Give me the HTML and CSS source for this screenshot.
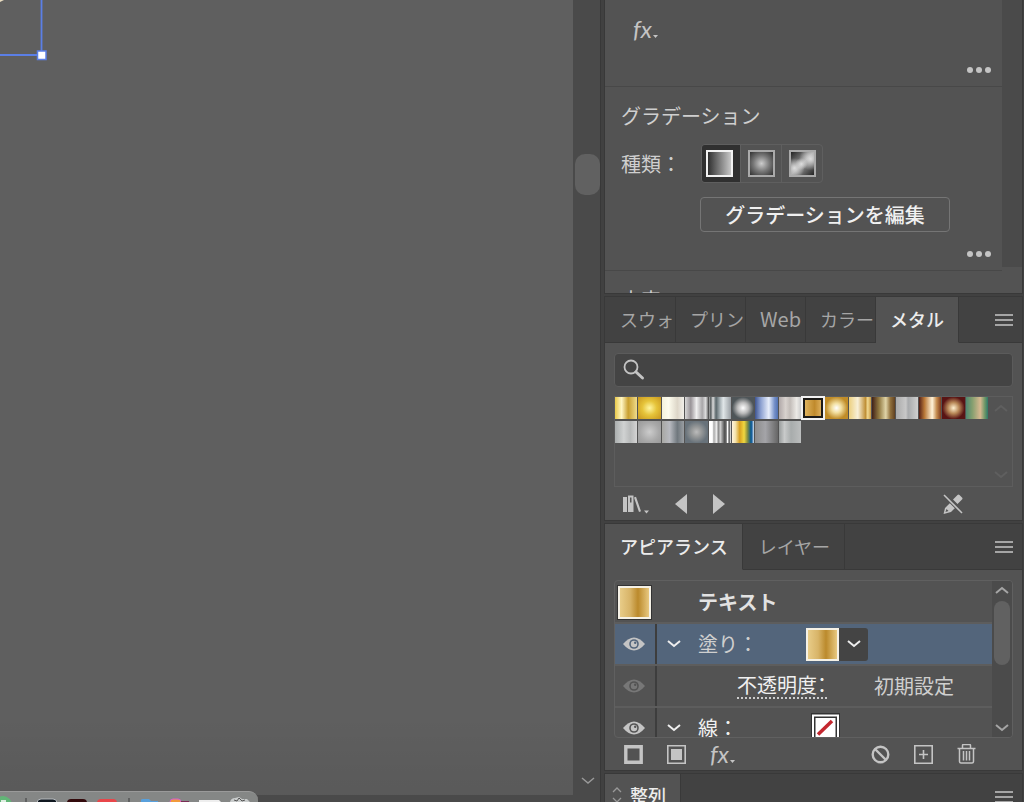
FILE: index.html
```html
<!DOCTYPE html>
<html lang="ja">
<head>
<meta charset="utf-8">
<title>グラデーション</title>
<link rel="stylesheet" href="styles.css">
</head>
<body>
<div class="app">
  <main class="document">
    <div class="artboard">
      <svg class="selection" width="50" height="64" viewBox="0 0 50 64" aria-hidden="true">
        <path d="M0 0h4L0 2z" fill="#e9dcc0"/>
        <path d="M0 55H41.500V0" fill="none" stroke="#5b7fe6" stroke-width="1.800"/>
        <rect x="37.500" y="51" width="8.500" height="8.500" fill="#fff" stroke="#5b7fe6" stroke-width="1.500"/>
      </svg>
    </div>
    <div class="scroll-y">
      <div class="thumb"></div>
      <svg width="14" height="8" viewBox="0 0 14 8" aria-hidden="true"><path d="M1 1l6 5 6-5" fill="none" stroke="#999" stroke-width="1.500"/></svg>
    </div>
    <div class="scroll-x"></div>
    <div class="dock" aria-hidden="true">
      <svg width="258" height="10" viewBox="0 0 258 10">
        <circle cx="3" cy="13" r="9" fill="#62b577"/><path d="M1 8h5v2H1z" fill="#dcefe0"/>
        <path d="M26 6v4M129 6v4" stroke="#555" stroke-width="1.500"/>
        <rect x="37" y="7" width="20" height="10" rx="4" fill="#101820" stroke="#b5b9bd"/>
        <rect x="67" y="7" width="20" height="10" rx="4" fill="#330a0c"/>
        <rect x="97" y="7" width="20" height="10" rx="4" fill="#e8464a"/>
        <path d="M141 10V8q0-1 2-1h6l2 2h7v1z" fill="#58a0dc"/>
        <rect x="170" y="7" width="11" height="8" rx="3" fill="#f19a3c" stroke="#d45fd0"/><path d="M181 9h8v1h-8z" fill="#7a2d55"/>
        <path d="M199 8h20l2 2h-22z" fill="#eee"/>
        <path d="M230 10q1-4 5-4l4-1 3 2 5 0 3 3z" fill="#c9cccc"/><path d="M234 8l3 1 2-3 3 3 3-1" fill="none" stroke="#555"/>
      </svg>
    </div>
  </main>

  <aside class="panels">
    <section class="panel properties">
      <div class="sections">
        <div class="section effects">
          <button class="fx" aria-label="効果を追加"><i>fx</i><svg width="5" height="3" viewBox="0 0 5 3"><path d="M0 0h5L2.500 3z"/></svg></button>
          <button class="more" aria-label="その他のオプション"><svg width="24" height="6" viewBox="0 0 24 6"><circle cx="3" cy="3" r="3"/><circle cx="12" cy="3" r="3"/><circle cx="21" cy="3" r="3"/></svg></button>
        </div>
        <div class="section gradient">
          <h2>グラデーション</h2>
          <div class="field">
            <span class="field-name">種類：</span>
            <div class="types">
              <button class="type on" aria-label="線形"><span class="chip linear"></span></button>
              <button class="type" aria-label="円形"><span class="chip radial"></span></button>
              <button class="type" aria-label="フリーグラデーション"><span class="chip freeform"></span></button>
            </div>
          </div>
          <button class="edit">グラデーションを編集</button>
          <button class="more" aria-label="その他のオプション"><svg width="24" height="6" viewBox="0 0 24 6"><circle cx="3" cy="3" r="3"/><circle cx="12" cy="3" r="3"/><circle cx="21" cy="3" r="3"/></svg></button>
        </div>
        <div class="section next"><h2>文字</h2></div>
      </div>
      <div class="track"></div>
    </section>

    <section class="panel">
      <nav class="tabs">
        <button class="tab">スウォ</button><button class="tab">プリン</button><button class="tab latin">Web</button><button class="tab">カラー</button><button class="tab active">メタル</button>
        <button class="menu" aria-label="パネルメニュー"><svg width="18" height="12" viewBox="0 0 18 12"><path d="M0 1h18M0 6h18M0 11h18"/></svg></button>
      </nav>
      <div class="body">
        <label class="search">
          <svg width="22" height="22" viewBox="0 0 22 22" aria-hidden="true"><circle cx="8" cy="8" r="6.500" fill="none" stroke="#c4c4c4" stroke-width="1.800"/><path d="M13 13l6.500 6" stroke="#c4c4c4" stroke-width="3" stroke-linecap="round"/></svg>
          <input type="text" aria-label="スウォッチを検索">
        </label>
        <div class="well">
          <div class="swatches">
            <button class="s1" aria-label="ゴールド 1"></button><button class="s2" aria-label="ゴールド 2"></button><button class="s3" aria-label="パール"></button><button class="s4" aria-label="シルバー 1"></button><button class="s5" aria-label="シルバー 2"></button><button class="s6" aria-label="スチール"></button><button class="s7" aria-label="ブルー"></button><button class="s8" aria-label="プラチナ"></button><button class="s9 chosen" aria-label="ゴールド 3"></button><button class="s10" aria-label="ゴールド 4"></button><button class="s11" aria-label="ゴールド 5"></button><button class="s12" aria-label="ブロンズ"></button><button class="s13" aria-label="アルミ"></button><button class="s14" aria-label="カッパー 1"></button><button class="s15" aria-label="カッパー 2"></button><button class="s16" aria-label="パティナ"></button>
            <button class="s17" aria-label="クローム 1"></button><button class="s18" aria-label="クローム 2"></button><button class="s19" aria-label="クローム 3"></button><button class="s20" aria-label="クローム 4"></button><button class="s21" aria-label="クローム 5"></button><button class="s22" aria-label="スペクトル"></button><button class="s23" aria-label="グレー 1"></button><button class="s24" aria-label="グレー 2"></button>
          </div>
          <div class="well-arrows">
            <svg width="14" height="8" viewBox="0 0 14 8"><path d="M1 7l6-5 6 5"/></svg>
            <svg width="14" height="8" viewBox="0 0 14 8"><path d="M1 1l6 5 6-5"/></svg>
          </div>
        </div>
        <div class="tools library">
          <button aria-label="ライブラリ"><svg width="26" height="20" viewBox="0 0 26 20"><path d="M0 3h4v15H0zM5 1.500h5.500V18H5zM11 3.500l2-.7 5 14.500-2 .7z"/><path d="M7 3.500h1.500v5H7z" fill="#535353"/><path d="M21 16.500h5l-2.500 3z"/></svg></button>
          <button aria-label="前へ"><svg width="12" height="20" viewBox="0 0 12 20"><path d="M12 0v20L0 10z"/></svg></button>
          <button aria-label="次へ"><svg width="12" height="20" viewBox="0 0 12 20"><path d="M0 0v20l12-10z"/></svg></button>
          <button class="push" aria-label="編集不可"><svg width="20" height="20" viewBox="0 0 20 20"><path d="M10 5.500L14.500 1q1-1 2 0l2.500 2.500q1 1 0 2L14.500 10zM8 8l5 5-5 5-7.500 2L2 14zM3.500 15L2.500 18l3-1z" fill-rule="evenodd"/><path d="M1 1l18 18" stroke="#535353" stroke-width="3.400"/><path d="M1 1l18 18" stroke="#c4c4c4" stroke-width="1.600"/></svg></button>
        </div>
      </div>
    </section>

    <section class="panel">
      <nav class="tabs">
        <button class="tab active">アピアランス</button><button class="tab wide">レイヤー</button>
        <button class="menu" aria-label="パネルメニュー"><svg width="18" height="12" viewBox="0 0 18 12"><path d="M0 1h18M0 6h18M0 11h18"/></svg></button>
      </nav>
      <div class="body">
        <div class="list">
          <div class="rows">
            <div class="row target"><span class="gold framed"></span><strong>テキスト</strong></div>
            <div class="row selected">
              <button class="eye" aria-label="表示"><svg width="22" height="14" viewBox="0 0 22 14"><path d="M0 7Q11-6 22 7 11 20 0 7z"/><circle cx="11" cy="7" r="4.800" class="hole"/><circle cx="11" cy="7" r="3.200"/><circle cx="12.200" cy="5.800" r="1.200" class="hole"/></svg></button>
              <button class="fold" aria-label="折りたたむ"><svg width="14" height="8" viewBox="0 0 14 8"><path d="M1 1l6 5 6-5"/></svg></button>
              <span class="name">塗り：</span>
              <span class="picker"><span class="gold"></span><button aria-label="塗りを選択"><svg width="14" height="8" viewBox="0 0 14 8"><path d="M1 1l6 5 6-5"/></svg></button></span>
            </div>
            <div class="row">
              <button class="eye dim" aria-label="表示"><svg width="22" height="14" viewBox="0 0 22 14"><path d="M0 7Q11-6 22 7 11 20 0 7z"/><circle cx="11" cy="7" r="4.800" class="hole"/><circle cx="11" cy="7" r="3.200"/><circle cx="12.200" cy="5.800" r="1.200" class="hole"/></svg></button>
              <a class="opacity" href="#">不透明度：</a><span class="value">初期設定</span>
            </div>
            <div class="row">
              <button class="eye" aria-label="表示"><svg width="22" height="14" viewBox="0 0 22 14"><path d="M0 7Q11-6 22 7 11 20 0 7z"/><circle cx="11" cy="7" r="4.800" class="hole"/><circle cx="11" cy="7" r="3.200"/><circle cx="12.200" cy="5.800" r="1.200" class="hole"/></svg></button>
              <button class="fold" aria-label="折りたたむ"><svg width="14" height="8" viewBox="0 0 14 8"><path d="M1 1l6 5 6-5"/></svg></button>
              <span class="name bright">線：</span>
              <svg class="none" width="29" height="30" viewBox="0 0 29 30"><path d="M0 0h29v30H0z" fill="#333"/><path d="M1 1.500h27V29H1z" fill="#fff"/><path d="M3 3.500h23V27H3z" fill="#333"/><path d="M4.500 5h20v20.500h-20z" fill="#fff"/><path d="M7 21.500L21 8" stroke="#c4272f" stroke-width="3.500"/></svg>
            </div>
          </div>
          <div class="list-scroll">
            <svg width="14" height="8" viewBox="0 0 14 8"><path d="M1 7l6-5 6 5"/></svg>
            <div class="thumb"></div>
            <svg width="14" height="8" viewBox="0 0 14 8"><path d="M1 1l6 5 6-5"/></svg>
          </div>
        </div>
        <div class="tools">
          <button aria-label="新規線を追加"><svg width="19" height="19" viewBox="0 0 19 19"><path d="M1.800 1.800h15.400v15.400H1.800z" fill="none" stroke="#c4c4c4" stroke-width="3.400"/></svg></button>
          <button aria-label="新規塗りを追加"><svg width="19" height="19" viewBox="0 0 19 19"><path d="M.8.8h17.400v17.400H.8z" fill="none" stroke="#c4c4c4" stroke-width="1.600"/><path d="M4 4h11v11H4z"/></svg></button>
          <button class="fx" aria-label="新規効果を追加"><i>fx</i><svg width="5" height="3" viewBox="0 0 5 3"><path d="M0 0h5L2.500 3z"/></svg></button>
          <button class="push" aria-label="アピアランスを消去"><svg width="19" height="19" viewBox="0 0 19 19"><g fill="none" stroke="#c4c4c4" stroke-width="2.400"><circle cx="9.500" cy="9.500" r="7.800"/><path d="M4 4l11 11"/></g></svg></button>
          <button aria-label="項目を複製"><svg width="19" height="19" viewBox="0 0 19 19"><path d="M.8.8h17.400v17.400H.8zM9.500 5v9M5 9.500h9" fill="none" stroke="#c4c4c4" stroke-width="1.600"/></svg></button>
          <button aria-label="項目を削除"><svg width="19" height="20" viewBox="0 0 19 20"><path d="M.5 4.500h18M5.500 4V1.500q0-1 1-1h6q1 0 1 1V4M2.500 5v12.500q0 1.500 1.500 1.500h11q1.500 0 1.500-1.500V5M6.500 7v9.500M9.500 7v9.500M12.500 7v9.500" fill="none" stroke="#c4c4c4" stroke-width="1.500"/></svg></button>
        </div>
      </div>
    </section>

    <section class="panel last">
      <nav class="tabs">
        <button class="tab active align"><svg width="10" height="18" viewBox="0 0 10 18"><path d="M1 6l4-4 4 4M1 12l4 4 4-4" fill="none" stroke="#999" stroke-width="1.300"/></svg><span>整列</span></button>
        <button class="menu" aria-label="パネルメニュー"><svg width="18" height="12" viewBox="0 0 18 12"><path d="M0 1h18M0 6h18M0 11h18"/></svg></button>
      </nav>
    </section>
  </aside>
</div>
</body>
</html>
```

FILE: styles.css
```css
* { box-sizing: border-box; }

body {
  margin: 0;
  background: #3d3d3d;
  color: #cfcfcf;
  font: 400 20px/24px "Noto Sans CJK JP", sans-serif;
}

button {
  display: flex;
  align-items: center;
  justify-content: center;
  margin: 0;
  padding: 0;
  border: 0;
  background: none;
  color: inherit;
  font: inherit;
}

svg { display: block; flex: none; fill: #c4c4c4; }
h2 { margin: 0; font: inherit; }

.app {
  display: grid;
  grid-template-columns: minmax(0, 1fr) 424px;
  height: 100vh;
  overflow: hidden;
}

/* Document window */
.document {
  position: relative;
  display: grid;
  grid-template: minmax(0, 1fr) 7px / minmax(0, 1fr) 27px;
}
.artboard {
  position: relative;
  background: linear-gradient(transparent 90%, rgba(0, 0, 0, .06)) #5f5f5f;
}
.selection { position: absolute; left: 0; top: 0; }
.scroll-y {
  display: flex;
  flex-direction: column;
  align-items: center;
  padding: 154px 0 10px 2px;
  background: #4a4a4a;
}
.scroll-y .thumb {
  width: 25px;
  height: 41px;
  margin-bottom: auto;
  border-radius: 10px;
  background: #616161;
}
.scroll-x { grid-column: 1 / -1; background: #4a4a4a; }
.dock {
  position: absolute;
  left: 0;
  bottom: 0;
  overflow: hidden;
  border-top: 1px solid #9a9a9a;
  border-radius: 0 9px 0 0;
  background: #858786;
}

/* Panels */
.panels {
  display: flex;
  flex-direction: column;
  gap: 4px;
  overflow: hidden;
  padding: 0 2px 0 4px;
  border-left: 1px solid #383838;
  background: #414141;
}
.panel { flex: none; background: #535353; outline: 1px solid #393939; }

.properties { display: grid; grid-template-columns: 1fr 20px; }
.track { margin-bottom: 26px; background: #4a4a4a; }
.section {
  display: flex;
  flex-direction: column;
  align-items: flex-start;
  padding: 0 11px 0 16px;
  border-bottom: 1px solid #484848;
}
.effects { padding-top: 17px; }
.effects .fx { margin-left: 12px; margin-bottom: 26px; }
.more { align-self: flex-end; padding-bottom: 13px; }
.gradient { padding-top: 17px; }
.field { display: flex; align-items: center; margin-top: 16px; }
.field-name { width: 80px; }
.types {
  display: flex;
  border: 1px solid #5f5f5f;
  border-radius: 4px;
}
.type { width: 41px; height: 37px; border-left: 1px solid #5f5f5f; }
.type:first-child { width: 38px; padding-right: 3px; border: 0; }
.type.on { background: #303030; border-radius: 3px 0 0 3px; }
.chip { width: 27px; height: 27px; border: 2px solid #aaa; }
.on .chip { border-color: #f2f2f2; }
.linear { background: linear-gradient(90deg, #303030, #c8c8c8); }
.radial { background: radial-gradient(circle, #ccc, #777 50%, #303030); }
.freeform {
  background:
    radial-gradient(circle at 15% 70%, #ddd, transparent 40%),
    radial-gradient(circle at 45% 52%, #ddd, transparent 35%),
    radial-gradient(circle at 85% 30%, #ddd, transparent 45%),
    linear-gradient(135deg, #222, #999 50%, #222);
}
.edit {
  align-self: stretch;
  height: 35px;
  margin: 14px 41px 19px 79px;
  border: 1px solid #757575;
  border-radius: 4px;
  color: #f0f0f0;
  font-weight: 500;
}
.next { height: 22px; padding-top: 17px; overflow: hidden; border: 0; }

.fx { align-items: flex-end; gap: 1px; color: #c4c4c4; }
.fx i { font: italic 24px/24px Lato, sans-serif; }
.fx svg { margin-bottom: 3px; }

/* Tabs */
.tabs {
  display: flex;
  height: 46px;
  background: #424242;
}
.tab {
  padding: 0 1px 2px 14px;
  border: solid #393939;
  border-width: 0 1px 1px 0;
  color: #a6a6a6;
  font-size: 18px;
}
.tab:first-child { padding-left: 15px; }
.tab.latin { padding-right: 4px; font-size: 20px; }
.tab.wide { padding: 0 14px 2px 16px; }
.tab.active {
  padding-right: 14px;
  border-bottom-color: #535353;
  background: #535353;
  color: #ececec;
  font-weight: 500;
}
.menu {
  flex: 1;
  justify-content: flex-end;
  padding-right: 9px;
  border-bottom: 1px solid #393939;
}
.menu svg, .well-arrows svg, .list-scroll svg, .fold svg, .picker svg {
  fill: none;
  stroke: #a5a5a5;
  stroke-width: 2;
}
.body { padding: 10px 9px 0; }

/* Swatches */
.search {
  display: flex;
  align-items: center;
  height: 34px;
  padding-left: 8px;
  border: 1px solid #5b5b5b;
  border-radius: 4px;
  background: #444;
}
.search input {
  flex: 1;
  min-width: 0;
  border: 0;
  outline: 0;
  background: none;
  color: #eee;
  font: inherit;
}
.well {
  display: flex;
  justify-content: space-between;
  height: 91px;
  margin-top: 9px;
  border: 1px solid #5d5d5d;
}
.swatches {
  display: grid;
  grid-template-columns: repeat(16, 1fr);
  grid-auto-rows: 22px;
  gap: 2px 1px;
  align-content: start;
  width: 373px;
}
.well-arrows {
  display: flex;
  flex-direction: column;
  justify-content: space-between;
  padding: 7px 4px;
}
.well-arrows svg { stroke: #5f5f5f; }
.chosen { border: 3px solid #1c1a17; outline: 2px solid #f2f2f2; outline-offset: -1px; }

.s1 { background: linear-gradient(90deg, #e8c94a, #fff6c4 30%, #c9a030 60%, #f0dc8c); }
.s2 { background: radial-gradient(circle, #fff6a0, #e6c43a 45%, #c8961e); }
.s3 { background: linear-gradient(90deg, #f4f2dc, #fdfcee 30%, #ddd6c8 70%, #f2f0ea); }
.s4 { background: linear-gradient(90deg, #d8d8d8, #999498 25%, #eee 50%, #a8a6a8 75%, #ddd 90%, #777); }
.s5 { background: linear-gradient(90deg, #aaa, #555c5e 8%, #ddd 18%, #59666a 32%, #a8b2b6 50%, #e0e6e8 65%, #999fa4); }
.s6 { background: radial-gradient(circle, #fff, #bbb 35%, #4e5558 70%); }
.s7 { background: linear-gradient(90deg, #3e5590, #8ca0d0 25%, #e8eefa 60%, #7590c8 85%, #5070b0); }
.s8 { background: linear-gradient(90deg, #b0a8a8, #d8d2ce 30%, #c2bcb8 50%, #eceae6 80%, #ccc); }
.s9 { background: linear-gradient(90deg, #dfb35e, #c08a2c 60%, #dcae5c); }
.s10 { background: radial-gradient(circle, #fff, #f2dfa0 30%, #c08c28 70%); }
.s11 { background: linear-gradient(90deg, #ecd080, #f8f0d8 40%, #c09038 75%, #f0d890 85%, #c89840); }
.s12 { background: linear-gradient(90deg, #402018, #907840 30%, #e0d4a8 60%, #90703c 80%, #604020); }
.s13 { background: linear-gradient(90deg, #aaa, #c8c8c8 45%, #a8aaac 55%, #d0d0d0); }
.s14 { background: linear-gradient(90deg, #542018, #b87838 25%, #fff2d8 60%, #c48c50 80%, #803c1c); }
.s15 { background: radial-gradient(circle, #fff0d0, #b88858 35%, #581414 70%); }
.s16 { background: linear-gradient(90deg, #508870, #88a070 30%, #d8b890 65%, #709868 85%, #307868); }
.s17 { background: linear-gradient(90deg, #aaaeae, #d0d2d2 40%, #b8baba 70%, #d4d4d4); }
.s18 { background: radial-gradient(circle, #ccc, #a8a8a8 60%, #999); }
.s19 { background: linear-gradient(90deg, #a8a8a4, #b8bac0 35%, #70787e 70%, #9a9ea2); }
.s20 { background: radial-gradient(circle, #bbb, #989a9a 30%, #68727a 70%); }
.s21 { background: linear-gradient(90deg, #fff 0 15%, #aaa 22%, #eee 35%, #888 42%, #ccc 52%, #555 70%, #666 78%, #fff 84%, #555 92%, #fff); }
.s22 { background: linear-gradient(90deg, #fff2dc, #f4e4b0 15%, #d8a020 35%, #f0d840 55%, #889040 70%, #105c88 85%, #1860a0 90%, #e0e8f0); }
.s23 { background: linear-gradient(90deg, #8c8c8c, #a4a4a8 45%, #666); }
.s24 { background: linear-gradient(90deg, #989c9c, #c8caca 25%, #a8acac 55%, #bcbebe); }

.tools {
  display: flex;
  align-items: center;
  gap: 24px;
  height: 32px;
  padding: 0 37px 0 10px;
}
.library { gap: 26px; height: 33px; padding: 0 50px 0 9px; }
.push { margin-left: auto; }

/* Appearance list */
.list {
  display: flex;
  height: 158px;
  overflow: hidden;
  border: 1px solid #606060;
  border-radius: 4px;
}
.rows { flex: 1; min-width: 0; padding-top: 1px; }
.row {
  display: flex;
  align-items: center;
  height: 42px;
  border-bottom: 2px solid #5d5d5d;
}
.row.selected { background: #53657b; }
.target { padding-left: 3px; color: #e2e2e2; }
.target strong { margin-left: 47px; font-weight: 700; }
.gold {
  width: 33px;
  height: 33px;
  border: 2px solid #f5f1e6;
  background: linear-gradient(90deg, #e8cc88, #d8b468 35%, #bb8a2c 62%, #e8c880);
}
.framed { outline: 1px solid #333; }
.eye { align-self: stretch; width: 42px; padding-right: 2px; border-right: 2px solid #3d3d3d; }
.eye .hole { fill: #535353; }
.selected .hole { fill: #53657b; }
.eye.dim > svg { fill: #777; }
.fold { width: 34px; }
.fold svg, .picker svg { stroke: #eee; }
.name { width: 108px; margin-left: 7px; }
.name + .none { margin-left: 5px; }
.bright { color: #f0f0f0; }
.picker { display: flex; border-radius: 3px; background: #444; }
.picker button { width: 29px; }
.opacity {
  margin-left: 80px;
  border-bottom: 2px dotted #ccc;
  color: #f0f0f0;
  font-feature-settings: "halt";
  text-decoration: none;
}
.value { margin-left: 47px; }
.list-scroll {
  display: flex;
  flex-direction: column;
  align-items: center;
  width: 20px;
  padding: 5px 0;
  background: #4b4b4b;
}
.list-scroll .thumb {
  width: 16px;
  height: 64px;
  margin: 7px 0 auto;
  border-radius: 8px;
  background: #616161;
}

.last .tab.align { gap: 8px; padding: 0 14px 4px 7px; }
```
